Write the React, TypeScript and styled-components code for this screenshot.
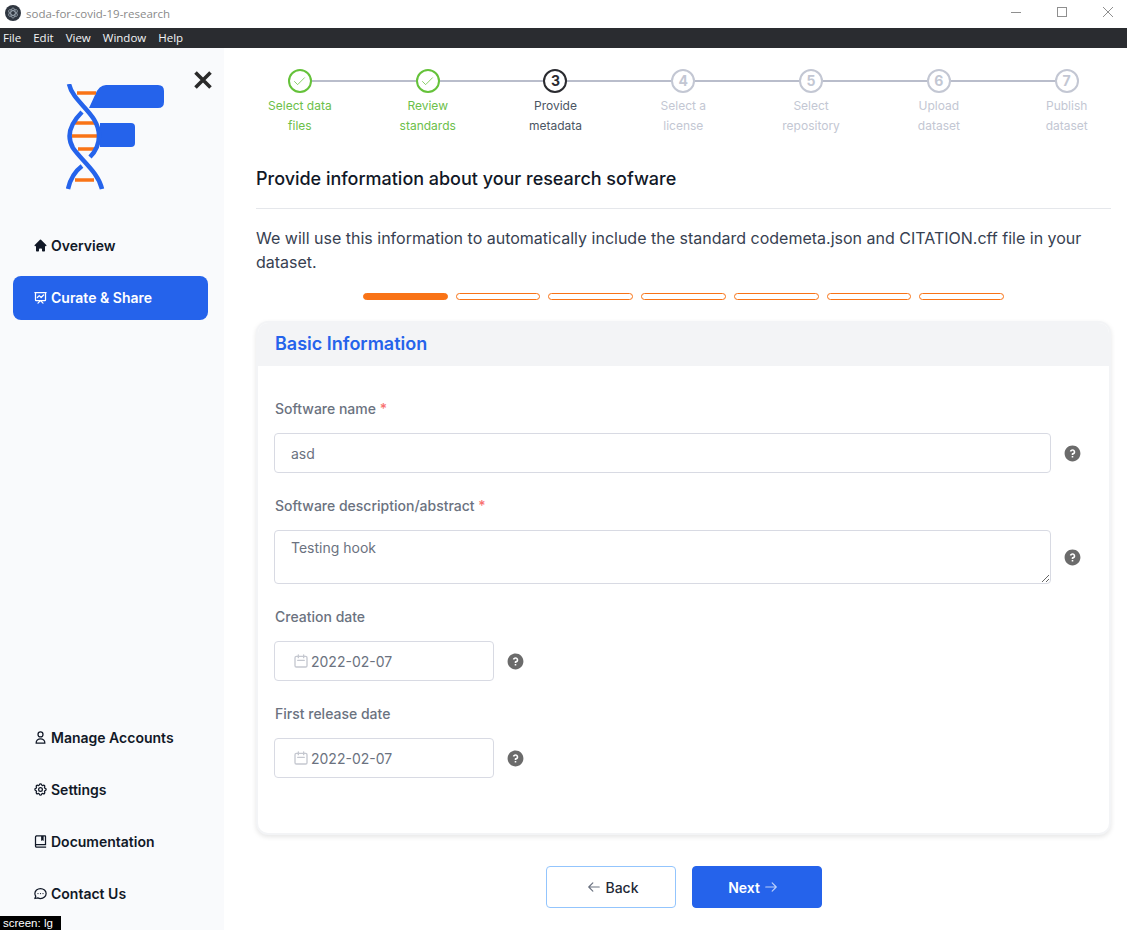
import styled, { createGlobalStyle } from "styled-components";
import { Check } from "lucide-react";
import { BiBookBookmark } from "react-icons/bi";
import {
  HiHome,
  HiOutlineArrowLeft,
  HiOutlineArrowRight,
  HiOutlineCalendar,
  HiOutlineChat,
  HiOutlineCog,
  HiOutlinePresentationChartLine,
  HiOutlineUser,
} from "react-icons/hi";
import { RiQuestionFill } from "react-icons/ri";

const GlobalStyle = createGlobalStyle`
  * { box-sizing: border-box; }
  html, body { margin: 0; height: 100%; overflow: hidden; background: #fff; }
  body { font-family: Inter, "Liberation Sans", sans-serif; color: #111827; }
`;

/* electron window frame */
const TitleBar = styled.div`
  height: 28px;
  display: flex;
  align-items: center;
  padding: 0 0 2px 5px;
  background: #fff;
  font-family: "Open Sans", "Liberation Sans", sans-serif;
  font-size: 11.5px;
  color: #8a8a8a;
`;

const TitleText = styled.span`
  margin-left: 5px;
  flex: 1;
`;

const WindowButton = styled.span`
  width: 46px;
  height: 24px;
  margin-bottom: 2px;
  padding-left: 8px;
  display: flex;
  align-items: center;
  justify-content: center;
`;

const MenuBar = styled.div`
  height: 20px;
  display: flex;
  align-items: center;
  gap: 12px;
  padding: 0 0 1px 3px;
  background: #2a2c30;
  color: #f2f4f6;
  font-family: "Open Sans", "Liberation Sans", sans-serif;
  font-size: 11.5px;
`;

const Shell = styled.div`
  height: 882px;
  display: flex;
`;

/* sidebar */
const Sidebar = styled.aside`
  position: relative;
  width: 224px;
  flex: none;
  display: flex;
  flex-direction: column;
  padding-bottom: 14px;
  background: #f9fafc;
`;

const LogoArea = styled.div`
  height: 176px;
  padding: 36px 0 0 66px;
`;

const CloseButton = styled.span`
  position: absolute;
  top: 21px;
  left: 192px;
  display: flex;
`;

const NavGroup = styled.nav`
  display: flex;
  flex-direction: column;
  gap: 8px;
  margin: 0 16px 0 13px;
`;

const BottomGroup = styled(NavGroup)`
  margin-top: auto;
`;

const NavItem = styled.a<{ $active?: boolean }>`
  height: 44px;
  display: flex;
  align-items: center;
  gap: 3px;
  padding: 0 0 2px 20px;
  border-radius: 8px;
  font-size: 14px;
  font-weight: 600;
  background: ${(p) => (p.$active ? "#2563eb" : "transparent")};
  color: ${(p) => (p.$active ? "#fff" : "#111827")};

  svg { flex: none; }
`;

/* main column */
const Main = styled.main`
  flex: 1;
  min-width: 0;
  padding: 21px 16px 0 32px;
`;

const Stepper = styled.ol`
  list-style: none;
  display: grid;
  grid-template-columns: repeat(7, 127.8px);
  margin: 0 0 0 -20px;
  padding: 0;
  width: 895px;
`;

const Step = styled.li<{ $state: string }>`
  position: relative;
  display: flex;
  flex-direction: column;
  align-items: center;
  text-align: center;
  font-size: 12px;
  line-height: 20px;
  color: ${(p) => (p.$state === "done" ? "#6cc04a" : p.$state === "active" ? "#4b5563" : "#c3c7d3")};

  &:not(:last-child)::after {
    content: "";
    position: absolute;
    top: 11px;
    left: 50%;
    width: 100%;
    height: 2px;
    background: #b9bdcb;
  }
`;

const StepCircle = styled.span<{ $state: string }>`
  position: relative;
  z-index: 1;
  width: 24px;
  height: 24px;
  margin-bottom: 3px;
  display: flex;
  align-items: center;
  justify-content: center;
  border-radius: 50%;
  background: #fff;
  font-size: 14px;
  font-weight: 700;
  border: 2px solid ${(p) => (p.$state === "done" ? "#65c23a" : p.$state === "active" ? "#2a2b30" : "#c3c7d3")};
  color: ${(p) => (p.$state === "active" ? "#2a2b30" : "#c3c7d3")};
`;

const PageTitle = styled.h2`
  margin: 32px 0 0;
  padding-bottom: 18px;
  border-bottom: 1px solid #e5e7eb;
  font-size: 18px;
  line-height: 22px;
  font-weight: 500;
  letter-spacing: -0.02px;
  color: #111827;
`;

const Intro = styled.p`
  margin: 17px 0 0;
  font-size: 16px;
  line-height: 24px;
  color: #374151;
`;

const Pager = styled.div`
  display: flex;
  justify-content: center;
  gap: 8px;
  margin-top: 19px;
`;

const PagerBar = styled.span<{ $on?: boolean }>`
  width: 84.7px;
  height: 7px;
  border-radius: 4px;
  border: 1px solid #f97316;
  background: ${(p) => (p.$on ? "#f97316" : "#fff")};
`;

const Card = styled.section`
  margin-top: 21px;
  height: 514px;
  border-radius: 12px;
  border: 2px solid #f3f4f6;
  overflow: hidden;
  background: #fff;
  box-shadow: 0 2px 5px rgba(0, 0, 0, 0.1);
`;

const CardHeader = styled.h3`
  margin: 0;
  height: 43px;
  padding: 0 0 2px 17px;
  display: flex;
  align-items: center;
  background: #f3f4f6;
  font-size: 18px;
  font-weight: 600;
  color: #2563eb;
`;

const CardBody = styled.div`
  padding: 33px 16px 0;
  display: flex;
  flex-direction: column;
  gap: 23px;
`;

const Field = styled.div``;

const Label = styled.label`
  display: block;
  margin: 0 0 14px 1px;
  font-size: 14px;
  line-height: 20px;
  font-weight: 500;
  color: #6b7280;
`;

const Required = styled.span`
  color: #f87171;
`;

const FieldRow = styled.div`
  display: flex;
  align-items: center;
  gap: 12px;
`;

const TextInput = styled.input`
  width: 777px;
  height: 40px;
  padding: 0 16px;
  border: 1px solid #d8dae3;
  border-radius: 4px;
  outline: none;
  background: #fff;
  font: 400 14px Inter, sans-serif;
  color: #6b7280;
`;

const TextArea = styled.textarea`
  display: block;
  width: 777px;
  height: 54px;
  padding: 7px 16px;
  border: 1px solid #d8dae3;
  border-radius: 4px;
  outline: none;
  background: #fff;
  font: 400 14px/20px Inter, sans-serif;
  color: #6b7280;
`;

const DateBox = styled.div`
  position: relative;
  display: flex;
`;

const DateInput = styled(TextInput)`
  width: 220px;
  padding-left: 36px;
`;

const DateIcon = styled(HiOutlineCalendar)`
  position: absolute;
  top: 12px;
  left: 19px;
  color: #c5c8d0;
`;

const HelpIcon = styled(RiQuestionFill)`
  flex: none;
  color: #6b6b6b;
`;

const Actions = styled.div`
  display: flex;
  justify-content: center;
  gap: 16px;
  margin-top: 31px;
`;

const Button = styled.button<{ $primary?: boolean }>`
  width: 130px;
  height: 42px;
  display: flex;
  align-items: center;
  justify-content: center;
  gap: 4px;
  padding: ${(p) => (p.$primary ? "0 7px 0 0" : "0 0 0 5px")};
  border-radius: 4px;
  border: 1px solid ${(p) => (p.$primary ? "#2563eb" : "#93c5fd")};
  background: ${(p) => (p.$primary ? "#2563eb" : "#fff")};
  color: ${(p) => (p.$primary ? "#fff" : "#1f2937")};
  font: ${(p) => (p.$primary ? 600 : 500)} 14px Inter, sans-serif;

  svg { color: ${(p) => (p.$primary ? "#bcd0fa" : "#6b7280")}; }
`;

const ScreenBadge = styled.div`
  position: fixed;
  left: 0;
  bottom: 0;
  width: 61px;
  height: 14px;
  background: #000;
  color: #fff;
  font: 400 11.5px/14px "Liberation Sans", sans-serif;
  padding-left: 3px;
  z-index: 5;
`;

const STEPS = [
  ["Select data", "files", "done"],
  ["Review", "standards", "done"],
  ["Provide", "metadata", "active"],
  ["Select a", "license", "todo"],
  ["Select", "repository", "todo"],
  ["Upload", "dataset", "todo"],
  ["Publish", "dataset", "todo"],
];

function Logo() {
  return (
    <svg width="100" height="106" viewBox="66 84 100 106" fill="none">
      <path d="M89 108 L95 95 Q99 85 106 85 H158 Q164 85 164 91 V102 Q164 108 158 108 Z" fill="#2563eb" />
      <path d="M100 123 H131 Q135 123 135 127 V143 Q135 147 131 147 H100 Z" fill="#2563eb" />
      <g stroke="#f97316" strokeWidth="3.5">
        <path d="M77 93 H96" />
        <path d="M75 123 H95" />
        <path d="M72 136 H100" />
        <path d="M78 149 H97" />
        <path d="M75 180 H94" />
      </g>
      <g stroke="#2563eb" strokeWidth="4.5">
        <path d="M69 84 C73 103 99 113 99 136 C99 146 95 152 90 157" />
        <path d="M102 189 C98 172 82 161 73 148 C66 136 70 124 82 112" />
        <path d="M82 166 C74 172 70 180 68 189" />
      </g>
    </svg>
  );
}

function AppIcon() {
  return (
    <svg width="16" height="16" viewBox="0 0 16 16" fill="none">
      <circle cx="8" cy="8" r="8" fill="#2f3640" />
      <g stroke="#a9b4c0" strokeWidth="0.7">
        <ellipse cx="8" cy="8" rx="5" ry="2.2" transform="rotate(30 8 8)" />
        <ellipse cx="8" cy="8" rx="5" ry="2.2" transform="rotate(90 8 8)" />
        <ellipse cx="8" cy="8" rx="5" ry="2.2" transform="rotate(150 8 8)" />
      </g>
    </svg>
  );
}

export default function App() {
  return (
    <>
      <GlobalStyle />
      <TitleBar>
        <AppIcon />
        <TitleText>soda-for-covid-19-research</TitleText>
        <WindowButton>
          <svg width="10" height="10" viewBox="0 0 10 10"><path d="M0 5.5H10" stroke="#8f8f8f" /></svg>
        </WindowButton>
        <WindowButton>
          <svg width="10" height="10" viewBox="0 0 10 10"><rect x="0.5" y="0.5" width="9" height="9" fill="none" stroke="#8f8f8f" /></svg>
        </WindowButton>
        <WindowButton>
          <svg width="10" height="10" viewBox="0 0 10 10"><path d="M0 0L10 10M10 0L0 10" stroke="#8f8f8f" /></svg>
        </WindowButton>
      </TitleBar>
      <MenuBar>
        <span>File</span>
        <span>Edit</span>
        <span>View</span>
        <span>Window</span>
        <span>Help</span>
      </MenuBar>

      <Shell>
        <Sidebar>
          <LogoArea>
            <Logo />
          </LogoArea>
          <CloseButton>
            <svg width="22" height="22" viewBox="0 0 22 22">
              <path d="M3.5 3.5L18.5 18.5M18.5 3.5L3.5 18.5" stroke="#2a2a2a" strokeWidth="3.6" />
            </svg>
          </CloseButton>
          <NavGroup>
            <NavItem><HiHome size={15} /> Overview</NavItem>
            <NavItem $active><HiOutlinePresentationChartLine size={15} /> Curate &amp; Share</NavItem>
          </NavGroup>
          <BottomGroup>
            <NavItem><HiOutlineUser size={15} /> Manage Accounts</NavItem>
            <NavItem><HiOutlineCog size={15} /> Settings</NavItem>
            <NavItem><BiBookBookmark size={15} /> Documentation</NavItem>
            <NavItem><HiOutlineChat size={15} /> Contact Us</NavItem>
          </BottomGroup>
        </Sidebar>

        <Main>
          <Stepper>
            {STEPS.map(([first, second, state], i) => (
              <Step key={first + second} $state={state}>
                <StepCircle $state={state}>
                  {state === "done" ? <Check size={15} strokeWidth={1.2} color="#65c23a" /> : i + 1}
                </StepCircle>
                <span>{first}</span>
                <span>{second}</span>
              </Step>
            ))}
          </Stepper>

          <PageTitle>Provide information about your research sofware</PageTitle>
          <Intro>
            We will use this information to automatically include the standard codemeta.json and CITATION.cff file in
            your dataset.
          </Intro>

          <Pager>
            {[0, 1, 2, 3, 4, 5, 6].map((n) => (
              <PagerBar key={n} $on={n === 0} />
            ))}
          </Pager>

          <Card>
            <CardHeader>Basic Information</CardHeader>
            <CardBody>
              <Field>
                <Label>Software name <Required>*</Required></Label>
                <FieldRow>
                  <TextInput defaultValue="asd" />
                  <HelpIcon size={19} />
                </FieldRow>
              </Field>
              <Field>
                <Label>Software description/abstract <Required>*</Required></Label>
                <FieldRow>
                  <TextArea defaultValue="Testing hook" />
                  <HelpIcon size={19} />
                </FieldRow>
              </Field>
              <Field>
                <Label>Creation date</Label>
                <FieldRow>
                  <DateBox>
                    <DateIcon size={16} />
                    <DateInput defaultValue="2022-02-07" />
                  </DateBox>
                  <HelpIcon size={19} />
                </FieldRow>
              </Field>
              <Field>
                <Label>First release date</Label>
                <FieldRow>
                  <DateBox>
                    <DateIcon size={16} />
                    <DateInput defaultValue="2022-02-07" />
                  </DateBox>
                  <HelpIcon size={19} />
                </FieldRow>
              </Field>
            </CardBody>
          </Card>

          <Actions>
            <Button><HiOutlineArrowLeft size={14} /> Back</Button>
            <Button $primary>Next <HiOutlineArrowRight size={14} /></Button>
          </Actions>
        </Main>
      </Shell>
      <ScreenBadge>screen: lg</ScreenBadge>
    </>
  );
}
